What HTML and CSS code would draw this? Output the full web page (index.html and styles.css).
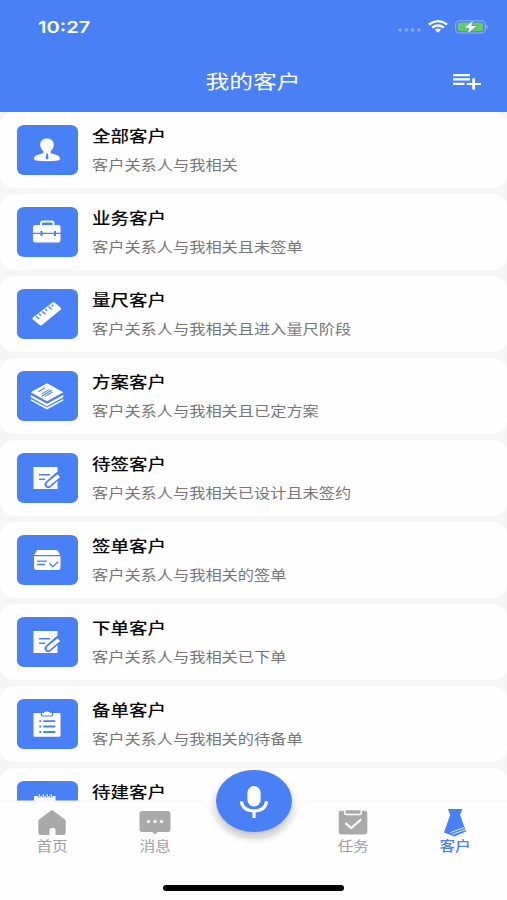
FILE: index.html
```html
<!DOCTYPE html>
<html lang="zh-CN">
<head>
<meta charset="utf-8">
<title>我的客户</title>
<link rel="stylesheet" href="styles.css">
</head>
<body>
<div class="app">
  <header class="header">
    <div class="status">
      <span class="time">10:27</span>
      <svg class="signal" width="24" height="4" viewBox="0 0 24 4" fill="#86abfa"><circle cx="2" cy="2" r="1.700"/><circle cx="8.300" cy="2" r="1.700"/><circle cx="14.600" cy="2" r="1.700"/><circle cx="20.900" cy="2" r="1.700"/></svg>
      <svg class="wifi" width="20" height="13" viewBox="0 0 20 13" fill="none" stroke="#fff" stroke-width="2.3"><path d="M.8 4.500Q10-2.100 19.200 4.500"/><path d="M4.100 7.700Q10 3.300 15.900 7.700"/><path d="M6.800 9.600Q10 7.500 13.200 9.600L10 12.800Z" fill="#fff" stroke="none"/></svg>
      <svg class="battery" width="34" height="14" viewBox="0 0 34 14"><rect x=".6" y=".8" width="29.600" height="12.200" rx="3.800" fill="none" stroke="#91b2fc" stroke-width="1.100"/><path d="M31.500 4.700Q34.200 6.900 31.500 9.100Z" fill="#9dbbfc"/><rect x="2.800" y="2.500" width="25.200" height="8.800" rx="2" fill="#65cb67"/><path d="M18 .8 9.500 7.700h5L12.700 13.200 21.500 6h-5.200Z" fill="#fff" stroke="#4a80f5" stroke-width="1" paint-order="stroke"/></svg>
    </div>
    <div class="navbar">
      <h1 class="heading">我的客户</h1>
      <svg class="add" width="28" height="18" viewBox="0 0 28 18" fill="#fff"><path d="M0 1h17v2.200H0zM0 5.300h17v2.200H0zM0 9.800h11.500V12H0zM19.300 5.300h2.800v4.600H28v2.200h-5.900v4.700h-2.800v-4.700h-5.600V9.900h5.600z"/></svg>
    </div>
  </header>

  <main class="list">
    <section class="card">
      <div class="tile"><svg width="34" height="30" viewBox="0 0 34 30"><path d="M17 3.500c4.200 0 6.800 2.500 6.800 6 0 3.300-1.600 5.200-3.100 6.600v2c1.800 1.400 8.800 1.300 9.300 5.600q.1 1.600-2 1.900-11 1.200-22 0-2-.3-2-1.900c.5-4.300 7.500-4.200 9.300-5.600v-2c-1.500-1.400-3.100-3.300-3.100-6.600 0-3.500 2.600-6 6.800-6Z" fill="#fff"/><path d="M15.900 18.800h2.500l-.5 1.500.8 2.500-1.500 2-1.600-2 .8-2.500Z" fill="#4a80f5"/></svg></div>
      <div class="info"><h2 class="name">全部客户</h2><p class="desc">客户关系人与我相关</p></div>
    </section>
    <section class="card">
      <div class="tile"><svg width="34" height="30" viewBox="0 0 34 30"><path d="M11 8V6.500Q11 4.500 13.200 4.500h8Q23.500 4.500 23.500 6.500V8" fill="none" stroke="#fff" stroke-width="2"/><path d="M5.500 8h23q2 0 2 2v5.700H26V14h-2v1.700H12.500V14h-2v1.700H3V10q0-2 2.500-2ZM3 16.900h7.500v2h2v-2H24v2h2v-2h4.500v6.400q0 2.200-2.200 2.200H5.500q-2.500 0-2.500-2.200Z" fill="#fff"/></svg></div>
      <div class="info"><h2 class="name">业务客户</h2><p class="desc">客户关系人与我相关且未签单</p></div>
    </section>
    <section class="card">
      <div class="tile"><svg width="34" height="30" viewBox="0 0 34 30"><path d="M3 18.400 22.500 3.400q1-.7 2 0l6.300 5.400q.9.900 0 1.700L12 26q-1.300.9-2.500 0L2.700 20.300q-.9-1 .3-1.900Z" fill="#fff"/><path d="m6 17.500 3.200 2.500m-.1-5 1.900 1.600m1.200-4.100 3.300 2.600m-.1-5 1.900 1.600m1.200-4.100 3.300 2.600m-.1-4.300 1.600 1.400" stroke="#4a80f5" stroke-width="1.400"/></svg></div>
      <div class="info"><h2 class="name">量尺客户</h2><p class="desc">客户关系人与我相关且进入量尺阶段</p></div>
    </section>
    <section class="card">
      <div class="tile"><svg width="34" height="30" viewBox="0 0 34 30"><path d="M.7 11.300 17 2.200l16.300 9.100L17 20.200ZM.7 14 17 22.800 33.300 14v2.300L17 25.200.7 16.300ZM.7 18 17 26.600 33.300 18v1.500L17 28.400.7 19.500Z" fill="#fff"/><path d="m8.500 10.700 6.500-3.900m-3.100 6.100L19 8.600m-7.100 6.600L21.800 9m-6.600 6.400 7.300-4.500" stroke="#4a80f5" stroke-width="1.100"/></svg></div>
      <div class="info"><h2 class="name">方案客户</h2><p class="desc">客户关系人与我相关且已定方案</p></div>
    </section>
    <section class="card">
      <div class="tile"><svg width="34" height="30" viewBox="0 0 34 30"><path d="M3.500 4h24v22h-24Z" fill="#fff"/><path d="M9 11.800h11M9 16.300h6" stroke="#4a80f5" stroke-width="1.600"/><path d="M18.200 21.500 28.300 12.500" stroke="#4a80f5" stroke-width="7.200" stroke-linecap="round"/><path d="M18.300 21.300 28.800 12.800" stroke="#fff" stroke-width="3.700"/><path d="m16.500 20.800.6 2.500 3.600-.2-2.400-3Z" fill="#fff"/></svg></div>
      <div class="info"><h2 class="name">待签客户</h2><p class="desc">客户关系人与我相关已设计且未签约</p></div>
    </section>
    <section class="card">
      <div class="tile"><svg width="34" height="30" viewBox="0 0 34 30"><path d="M8.500 5h17.300q1.400 0 2.200 1.200l2.200 3.800h-26L6.400 6.200Q7 5 8.500 5ZM4 11.300h26.500V23q0 2-2.300 2h-22Q4 25 4 23Z" fill="#fff"/><path d="M7 16.100h10M7 19.500h8" stroke="#4a80f5" stroke-width="1.300"/><path d="m19.300 18.500 3.700 3 5.200-4.800" fill="none" stroke="#4a80f5" stroke-width="1.400"/></svg></div>
      <div class="info"><h2 class="name">签单客户</h2><p class="desc">客户关系人与我相关的签单</p></div>
    </section>
    <section class="card">
      <div class="tile"><svg width="34" height="30" viewBox="0 0 34 30"><path d="M3.500 4h24v22h-24Z" fill="#fff"/><path d="M9 11.800h11M9 16.300h6" stroke="#4a80f5" stroke-width="1.600"/><path d="M18.200 21.500 28.300 12.500" stroke="#4a80f5" stroke-width="7.200" stroke-linecap="round"/><path d="M18.300 21.300 28.800 12.800" stroke="#fff" stroke-width="3.700"/><path d="m16.500 20.800.6 2.500 3.600-.2-2.400-3Z" fill="#fff"/></svg></div>
      <div class="info"><h2 class="name">下单客户</h2><p class="desc">客户关系人与我相关已下单</p></div>
    </section>
    <section class="card">
      <div class="tile"><svg width="34" height="30" viewBox="0 0 34 30"><path d="M4.500 4h25q1 0 1 1v21.500q0 1.200-1.200 1.200H4.700q-1.200 0-1.200-1.200V5q0-1 1-1Z" fill="#fff"/><path d="M10.700 3h12.600v2.600q0 2-2 2h-8.600q-2 0-2-2Z" fill="#4a80f5"/><path d="M12 4h2q0-1.500 3-1.500T20 4h2v1.300q0 1.200-1.200 1.200h-7.600Q12 6.500 12 5.300Z" fill="#fff"/><path d="M9.300 12.100h2m2 0h12M9.300 17.500h2m2 0h12M9.300 23h2m2 0h12" stroke="#4a80f5" stroke-width="1.900"/></svg></div>
      <div class="info"><h2 class="name">备单客户</h2><p class="desc">客户关系人与我相关的待备单</p></div>
    </section>
    <section class="card">
      <div class="tile"><svg width="34" height="30" viewBox="0 0 34 30"><path d="M4 5h21.500v23H4Z" fill="#fff"/><path d="M8 4.200h2.600v2H8zm4 0h2.600v2H12zm4 0h2.600v2H16zm4 0h2.600v2H20z" fill="#4a80f5"/><path d="M9.300 3.200v2.500m4-2.500v2.500m4-2.500v2.500m4-2.500v2.500" stroke="#fff" stroke-width="1.200"/></svg></div>
      <div class="info"><h2 class="name">待建客户</h2></div>
    </section>
  </main>

  <footer class="footer">
    <svg class="edge" width="507" height="48" viewBox="0 0 507 48"><path d="M0 1H194C207 1 207 5 212 13 219 28 235 38 254 38S289 28 296 13C301 5 301 1 314 1H507" fill="none" stroke="#f3f3f3"/></svg>
    <nav class="tabs">
      <a class="tab"><svg width="30" height="27" viewBox="0 0 30 27"><path d="M15 .8q.7 0 1.300.5L28 10q.7.700.7 1.500V23q0 2.500-2.700 2.500h-7.500V20q0-1.500-2-1.500h-2q-2 0-2 1.500v5.500H4q-2.700 0-2.700-2.500V11.500q0-.9.8-1.500L13.700 1.300Q14.300.8 15 .8Z" fill="#a9a9a9"/></svg><span class="label">首页</span></a>
      <a class="tab"><svg width="32" height="27" viewBox="0 0 32 27"><path d="M3.500 1.500h25q3 0 3 2.600v16q0 2.500-3 2.500H19l-3 2.400-3-2.400H3.500q-3 0-3-2.500v-16q0-2.600 3-2.600Z" fill="#a9a9a9"/><g fill="#fff"><ellipse cx="9.500" cy="12" rx="1.700" ry="1.500"/><ellipse cx="16" cy="12" rx="1.700" ry="1.500"/><ellipse cx="22.500" cy="12" rx="1.700" ry="1.500"/></g></svg><span class="label">消息</span></a>
      <a class="mic"><svg width="32" height="36" viewBox="0 0 32 36"><rect x="9.400" y="2" width="13.200" height="20.500" rx="6.500" fill="#fff"/><path d="M3.300 17.300C4.300 23.500 9 27 16 27s11.700-3.500 12.700-9.700M16 27v7" fill="none" stroke="#fff" stroke-width="3.200"/></svg></a>
      <a class="tab"><svg width="30" height="27" viewBox="0 0 30 27"><path d="M3.500 1.300H6v2.200q0 2.200 2.300 2.200h13.400Q24 5.700 24 3.500V1.300h2.500q2.800 0 2.800 2.300v19q0 2.300-2.800 2.300h-23Q.7 24.900.7 22.600v-19q0-2.300 2.800-2.300ZM7.500.8h15v2.400q0 1-1.200 1H8.700q-1.200 0-1.200-1Z" fill="#a9a9a9"/><path d="m7.500 13.500 5.700 5 10-8.700" fill="none" stroke="#fff" stroke-width="2.200"/></svg><span class="label">任务</span></a>
      <a class="tab active"><svg width="30" height="28" viewBox="0 0 30 28"><path d="M8.500 0h13.300q.7 0 .3.900l-2.100 4.800L26 22.600 14.500 27.500 4 23.500 10.200 5.700 8.200.9Q7.900 0 8.500 0Z" fill="#4a80f5"/><path d="M10.300 23.600 24 18.700M12.500 25.300 25 20.800" stroke="#fff" stroke-width=".85"/></svg><span class="label">客户</span></a>
    </nav>
    <div class="home-bar"></div>
  </footer>
</div>
</body>
</html>
```
FILE: styles.css
```css
* { box-sizing: border-box; }

body {
  margin: 0;
  background: #fff;
  font-family: "Noto Sans CJK SC", sans-serif;
}

.app {
  display: flex;
  flex-direction: column;
  height: 900px;
  overflow: hidden;
}

.header {
  flex: none;
  height: 111.5px;
  background: #4a80f5;
  color: #fff;
}

.status {
  display: flex;
  align-items: center;
  height: 53px;
  padding: 0 17px 0 38px;
}

.time {
  margin-right: auto;
  font: 600 16.5px/20px Inter, sans-serif;
  transform: scaleX(1.22);
  transform-origin: left;
}

.signal { margin: 7px 6px 0 0; }
.wifi { margin-right: 7px; }
.battery { margin-right: 1px; }

.navbar {
  display: grid;
  grid-template-columns: 60px 1fr 60px;
  align-items: center;
  height: 56px;
}

.heading {
  grid-column: 2;
  margin: 0 1px 1px 0;
  text-align: center;
  font-size: 19.8px;
  font-weight: 400;
  line-height: 28px;
  transform: scaleX(1.2);
}

.add { margin-left: 6px; margin-top: 1px; }

.list {
  flex: 1;
  min-height: 0;
  display: flex;
  flex-direction: column;
  gap: 6px;
  overflow: hidden;
  background: #f5f5f5;
}

.card {
  flex: none;
  display: flex;
  gap: 13.5px;
  height: 76px;
  padding: 13px 17px 0;
  border-radius: 16px / 13px;
  background: #fefefe;
}

.tile {
  flex: none;
  display: flex;
  align-items: center;
  justify-content: center;
  width: 61px;
  height: 50px;
  padding-right: 1px;
  border-radius: 7px / 6px;
  background: #4a80f5;
}

.info { margin-top: -1px; }

.name,
.desc {
  margin: 0;
  white-space: nowrap;
  transform: scaleX(1.2);
  transform-origin: left;
}

.name {
  color: #080808;
  font-size: 15.4px;
  font-weight: 500;
  line-height: 22px;
}

.desc {
  margin-top: 8px;
  color: #777;
  font-size: 13.5px;
  line-height: 20px;
}

.footer {
  position: relative;
  flex: none;
  height: 99px;
  background: #fefefe;
}

.edge {
  position: absolute;
  top: -1px;
  left: 0;
}

.tabs {
  display: grid;
  grid-template-columns: 104px 102px 96px 102px 102px;
  height: 84px;
}

.tab {
  display: flex;
  flex-direction: column;
  align-items: center;
  padding-top: 8px;
  color: #a0a0a0;
}

.tab svg {
  flex: none;
  height: 28px;
}

.label {
  font-size: 13.1px;
  line-height: 18px;
  transform: scaleX(1.2);
}

.active {
  color: #4a80f5;
}

.active .label { font-weight: 500; }

.mic {
  position: relative;
  display: flex;
  align-items: center;
  justify-content: center;
  justify-self: center;
  width: 76px;
  height: 62px;
  margin-top: -31px;
  padding-top: 2px;
  border-radius: 50%;
  background: #4a80f5;
  box-shadow: 0 5px 8px rgba(0, 0, 0, .26);
}

.home-bar {
  width: 181px;
  height: 6px;
  margin: 0 auto;
  border-radius: 3px;
  background: #000;
}
```
